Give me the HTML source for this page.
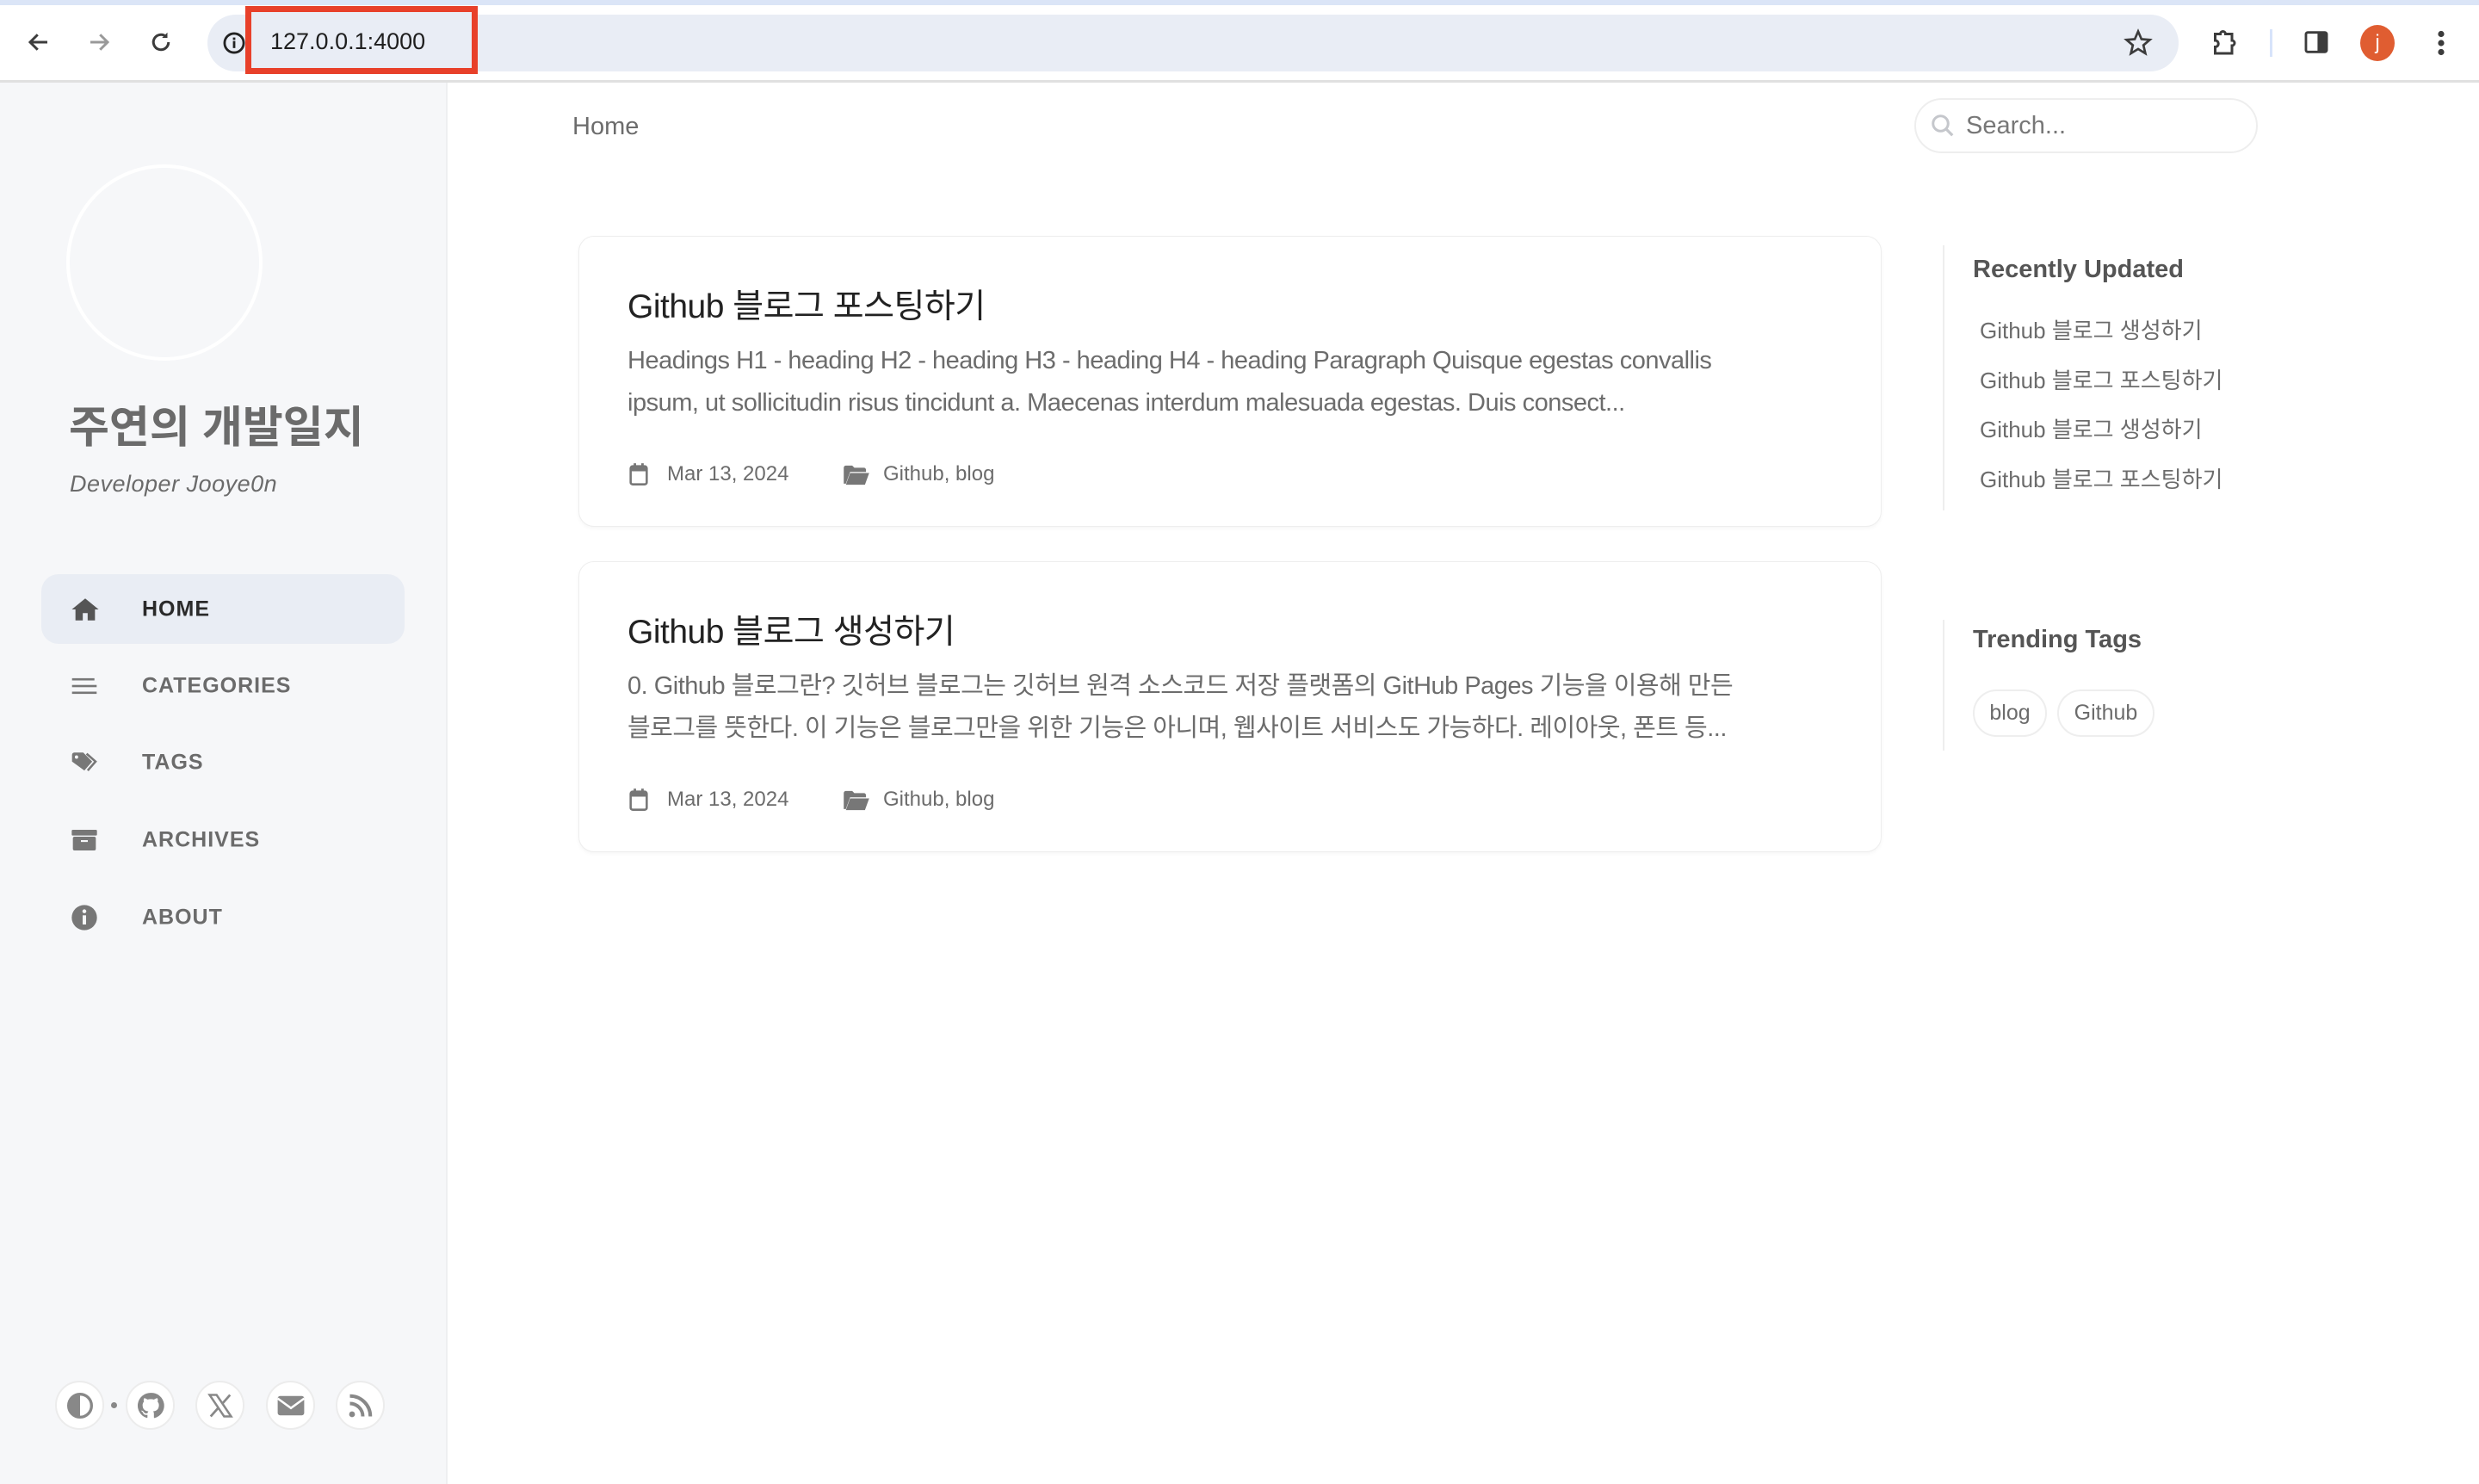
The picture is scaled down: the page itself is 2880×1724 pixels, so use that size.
<!DOCTYPE html>
<html><head><meta charset="utf-8"><style>
*{margin:0;padding:0;box-sizing:border-box}
body{width:2880px;height:1724px;overflow:hidden;background:#fff;font-family:"Liberation Sans","Noto Sans CJK KR",sans-serif;position:relative}
.abs{position:absolute}
#top{left:0;top:0;width:2880px;height:96px;background:#fff;border-bottom:3px solid #e0e0e0}
#tabstrip{left:0;top:0;width:2880px;height:6px;background:#dbe5f7}
#url{left:241px;top:17px;width:2290px;height:66px;background:#e9edf5;border-radius:33px}
#red{left:285px;top:7px;width:270px;height:79px;border:7px solid #e8402a;background:#e9edf5}
#side{left:0;top:96px;width:520px;height:1628px;background:#f6f7f9;border-right:2px solid #eeeff1}
.nav{position:absolute;left:48px;width:422px;height:81px;border-radius:20px;font-weight:bold;font-size:25px;letter-spacing:1px;color:#6b6b6b}
.nav span{position:absolute;left:117px;top:50%;transform:translateY(-50%)}
.nav svg{position:absolute;left:34px;top:50%;transform:translateY(-50%)}
.ci{position:absolute;width:57px;height:57px;border-radius:50%;background:#fff;border:2px solid #ececec;top:1604px;display:flex;align-items:center;justify-content:center}
.card{position:absolute;left:672px;width:1514px;height:338px;border:1px solid #eeeeee;border-radius:18px;box-shadow:0 2px 5px rgba(0,0,0,.04);background:#fff}
.card h2{position:absolute;left:56px;top:50px;font-size:39px;font-weight:normal;color:#222;letter-spacing:-0.5px}
.card p{position:absolute;left:56px;top:120px;width:1300px;font-size:29px;line-height:49px;color:#6c6c6c;letter-spacing:-0.5px}
.meta{position:absolute;top:262px;font-size:24px;color:#6c6c6c}
.ru{position:absolute;left:2300px;font-size:26px;color:#6c6c6c}
.tag{position:absolute;top:801px;height:55px;border:2px solid #eee;border-radius:28px;font-size:25px;color:#6c6c6c;display:flex;align-items:center;justify-content:center}
</style></head><body>
<div id="top" class="abs"></div>
<div id="tabstrip" class="abs"></div>
<div id="url" class="abs"></div>
<svg class="abs" style="left:30px;top:34px" width="30" height="30" viewBox="0 0 24 24"><path d="M20 12H5M11 5l-7 7 7 7" stroke="#3c3c3c" stroke-width="2.4" fill="none"/></svg>
<svg class="abs" style="left:100px;top:34px" width="30" height="30" viewBox="0 0 24 24"><path d="M4 12h15M13 5l7 7-7 7" stroke="#999" stroke-width="2.4" fill="none"/></svg>
<svg class="abs" style="left:172px;top:34px" width="30" height="30" viewBox="0 0 24 24"><path d="M19 12a7 7 0 1 1-2.1-5" stroke="#3c3c3c" stroke-width="2.4" fill="none"/><path d="M18 3v5h-5z" fill="#3c3c3c"/></svg>
<svg class="abs" style="left:258px;top:36px" width="28" height="28" viewBox="0 0 24 24"><circle cx="12" cy="12" r="9.5" stroke="#222" stroke-width="2.4" fill="none"/><rect x="10.8" y="10" width="2.4" height="7" fill="#222"/><rect x="10.8" y="6.5" width="2.4" height="2.4" fill="#222"/></svg>
<div id="red" class="abs"></div>
<div class="abs" style="left:314px;top:33px;font-size:27px;color:#1f1f1f">127.0.0.1:4000</div>
<svg class="abs" style="left:2466px;top:32px" width="36" height="36" viewBox="0 0 24 24"><path d="M12 3l2.6 6 6.4.5-4.9 4.2 1.5 6.3L12 16.6 6.4 20l1.5-6.3L3 9.5l6.4-.5z" stroke="#3c3c3c" stroke-width="1.8" fill="none"/></svg>
<svg class="abs" style="left:2566px;top:32px" width="36" height="36" viewBox="0 0 24 24"><path d="M5 5h4a2 2 0 0 1 4 0h5v5a2 2 0 0 1 0 4v6H5v-5a2 2 0 0 0 0-5z" stroke="#3c3c3c" stroke-width="2" fill="none"/></svg>
<div class="abs" style="left:2637px;top:34px;width:3px;height:32px;background:#d7e3fa"></div>
<svg class="abs" style="left:2674px;top:32px" width="34" height="34" viewBox="0 0 24 24"><rect x="3.5" y="4" width="17" height="16" rx="1.5" stroke="#3c3c3c" stroke-width="2" fill="none"/><rect x="13" y="4" width="7.5" height="16" fill="#3c3c3c"/></svg>
<div class="abs" style="left:2742px;top:29px;width:40px;height:42px;border-radius:50%;background:#e05d31;color:#fff;font-size:24px;text-align:center;line-height:42px">j</div>
<svg class="abs" style="left:2826px;top:32px" width="20" height="36" viewBox="0 0 10 24"><circle cx="5" cy="5" r="2.4" fill="#3c3c3c"/><circle cx="5" cy="12" r="2.4" fill="#3c3c3c"/><circle cx="5" cy="19" r="2.4" fill="#3c3c3c"/></svg>

<div id="side" class="abs"></div>
<div class="abs" style="left:77px;top:191px;width:228px;height:228px;border-radius:50%;border:4px solid #fff"></div>
<div class="abs" style="left:80px;top:455px;font-size:51px;font-weight:bold;color:#6b6b6b;letter-spacing:0px">주연의 개발일지</div>
<div class="abs" style="left:81px;top:547px;font-size:27px;font-style:italic;color:#6b6b6b;letter-spacing:0.5px">Developer Jooye0n</div>

<div class="nav" style="top:667px;background:#e9edf4;color:#2a2a2a"><svg width="34" height="30" viewBox="0 0 24 20"><path d="M12 1L1 10h3v9h6v-6h4v6h6v-9h3z" fill="#555"/></svg><span>HOME</span></div>
<div class="nav" style="top:756px"><svg width="32" height="26" viewBox="0 0 24 20"><rect x="1" y="3" width="20" height="2" fill="#777"/><rect x="1" y="9" width="22" height="2" fill="#777"/><rect x="1" y="15" width="22" height="2" fill="#777"/></svg><span>CATEGORIES</span></div>
<div class="nav" style="top:845px"><svg width="32" height="26" viewBox="0 0 24 20"><path d="M1 3a2 2 0 0 1 2-2h8l8 8-7 8-11-8z" fill="#777"/><path d="M14 2l8 7-7 8" stroke="#777" stroke-width="2" fill="none"/><circle cx="5" cy="5" r="1.5" fill="#f6f7f9"/></svg><span>TAGS</span></div>
<div class="nav" style="top:935px"><svg width="32" height="28" viewBox="0 0 24 20"><rect x="1" y="1" width="22" height="5" rx="1" fill="#777"/><rect x="2" y="7" width="20" height="12" rx="1.5" fill="#777"/><rect x="9" y="10" width="6" height="1.6" fill="#f6f7f9"/></svg><span>ARCHIVES</span></div>
<div class="nav" style="top:1025px"><svg width="32" height="32" viewBox="0 0 24 24"><circle cx="12" cy="12" r="11" fill="#777"/><rect x="10.5" y="10" width="3" height="8" fill="#f6f7f9"/><circle cx="12" cy="6.5" r="1.7" fill="#f6f7f9"/></svg><span>ABOUT</span></div>

<div class="ci" style="left:64px"><svg width="32" height="32" viewBox="0 0 24 24"><circle cx="12" cy="12" r="10" stroke="#888" stroke-width="2.5" fill="none"/><path d="M12 2a10 10 0 0 0 0 20z" fill="#888"/></svg></div>
<div class="abs" style="left:129px;top:1629px;width:7px;height:7px;border-radius:50%;background:#888"></div>
<div class="ci" style="left:146px"><svg width="34" height="34" viewBox="0 0 24 24"><path d="M12 1.5a10.5 10.5 0 0 0-3.3 20.5c.5.1.7-.2.7-.5v-2c-2.9.6-3.5-1.3-3.5-1.3-.5-1.2-1.2-1.5-1.2-1.5-.9-.7.1-.6.1-.6 1 .1 1.6 1.1 1.6 1.1.9 1.6 2.5 1.1 3.1.9.1-.7.4-1.1.7-1.4-2.3-.3-4.8-1.2-4.8-5.2 0-1.1.4-2.1 1.1-2.8-.1-.3-.5-1.3.1-2.8 0 0 .9-.3 2.9 1.1a10 10 0 0 1 5.2 0c2-1.400 2.9-1.1 2.9-1.1.6 1.5.2 2.5.1 2.8.7.7 1.1 1.7 1.1 2.8 0 4-2.5 4.9-4.8 5.2.4.3.7 1 .7 2v2.9c0 .3.2.6.7.5A10.5 10.5 0 0 0 12 1.5z" fill="#888"/></svg></div>
<div class="ci" style="left:227px"><svg width="30" height="30" viewBox="0 0 24 24"><path d="M2 2h6.5l13.5 20h-6.5z" stroke="#888" stroke-width="2" fill="none"/><path d="M21 2l-7.5 8.5M3 22l7.5-8.5" stroke="#888" stroke-width="2.2"/></svg></div>
<div class="ci" style="left:309px"><svg width="34" height="28" viewBox="0 0 24 20"><rect x="1" y="2" width="22" height="16" rx="2" fill="#888"/><path d="M1 4l11 8 11-8" stroke="#fff" stroke-width="1.8" fill="none"/></svg></div>
<div class="ci" style="left:390px"><svg width="30" height="30" viewBox="0 0 24 24"><circle cx="4" cy="20" r="2.7" fill="#888"/><path d="M2 10a12 12 0 0 1 12 12M2 3a19 19 0 0 1 19 19" stroke="#888" stroke-width="3.2" fill="none"/></svg></div>

<div class="abs" style="left:665px;top:131px;font-size:29px;color:#6c6c6c">Home</div>
<div class="abs" style="left:2224px;top:114px;width:399px;height:64px;border:2px solid #eee;border-radius:32px"></div>
<svg class="abs" style="left:2242px;top:131px" width="30" height="30" viewBox="0 0 24 24"><circle cx="10" cy="10" r="7" stroke="#c5c7cc" stroke-width="2.4" fill="none"/><path d="M15 15l6 6" stroke="#c5c7cc" stroke-width="2.6"/></svg>
<div class="abs" style="left:2284px;top:130px;font-size:29px;color:#777">Search...</div>

<div class="card" style="top:274px">
<h2>Github 블로그 포스팅하기</h2>
<p>Headings H1 - heading H2 - heading H3 - heading H4 - heading Paragraph Quisque egestas convallis ipsum, ut sollicitudin risus tincidunt a. Maecenas interdum malesuada egestas. Duis consect...</p>
<svg class="abs" style="left:57px;top:262px" width="24" height="28" viewBox="0 0 20 24"><rect x="2" y="4" width="16" height="18" rx="2" stroke="#777" stroke-width="2.2" fill="none"/><rect x="2" y="4" width="16" height="5" fill="#777"/><rect x="5" y="1" width="2.4" height="4" fill="#777"/><rect x="12.6" y="1" width="2.4" height="4" fill="#777"/></svg>
<div class="meta" style="left:102px">Mar 13, 2024</div>
<svg class="abs" style="left:306px;top:264px" width="32" height="26" viewBox="0 0 26 20"><path d="M1 3a2 2 0 0 1 2-2h6l2 2h9a2 2 0 0 1 2 2v2H7l-4 11H1z" fill="#777"/><path d="M7 8h18l-4 11H3z" fill="#777"/></svg>
<div class="meta" style="left:353px">Github, blog</div>
</div>
<div class="card" style="top:652px">
<h2>Github 블로그 생성하기</h2>
<p>0. Github 블로그란? 깃허브 블로그는 깃허브 원격 소스코드 저장 플랫폼의 GitHub Pages 기능을 이용해 만든 블로그를 뜻한다. 이 기능은 블로그만을 위한 기능은 아니며, 웹사이트 서비스도 가능하다. 레이아웃, 폰트 등...</p>
<svg class="abs" style="left:57px;top:262px" width="24" height="28" viewBox="0 0 20 24"><rect x="2" y="4" width="16" height="18" rx="2" stroke="#777" stroke-width="2.2" fill="none"/><rect x="2" y="4" width="16" height="5" fill="#777"/><rect x="5" y="1" width="2.4" height="4" fill="#777"/><rect x="12.6" y="1" width="2.4" height="4" fill="#777"/></svg>
<div class="meta" style="left:102px">Mar 13, 2024</div>
<svg class="abs" style="left:306px;top:264px" width="32" height="26" viewBox="0 0 26 20"><path d="M1 3a2 2 0 0 1 2-2h6l2 2h9a2 2 0 0 1 2 2v2H7l-4 11H1z" fill="#777"/><path d="M7 8h18l-4 11H3z" fill="#777"/></svg>
<div class="meta" style="left:353px">Github, blog</div>
</div>

<div class="abs" style="left:2257px;top:285px;width:2px;height:308px;background:#eee"></div>
<div class="abs" style="left:2292px;top:297px;font-size:29px;font-weight:bold;color:#555">Recently Updated</div>
<div class="ru" style="top:364px">Github 블로그 생성하기</div>
<div class="ru" style="top:422px">Github 블로그 포스팅하기</div>
<div class="ru" style="top:479px">Github 블로그 생성하기</div>
<div class="ru" style="top:537px">Github 블로그 포스팅하기</div>
<div class="abs" style="left:2257px;top:720px;width:2px;height:152px;background:#eee"></div>
<div class="abs" style="left:2292px;top:727px;font-size:29px;font-weight:bold;color:#555">Trending Tags</div>
<div class="tag" style="left:2292px;width:86px">blog</div>
<div class="tag" style="left:2390px;width:113px">Github</div>
</body></html>
